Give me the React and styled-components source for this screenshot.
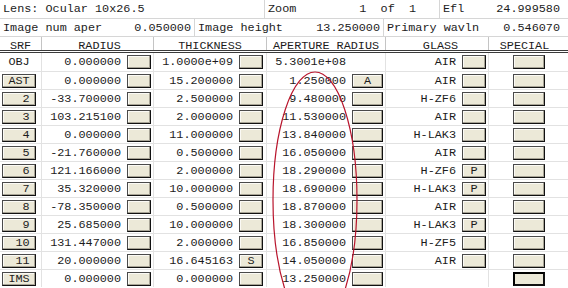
import React from 'react';
import styled, { createGlobalStyle } from 'styled-components';

const Global = createGlobalStyle`
  html, body { margin: 0; padding: 0; background: #ffffff; }
  body {
    font-family: "Liberation Mono", "DejaVu Sans Mono", monospace;
    font-size: 11.8px;
    color: #1c1c1c;
  }
`;

const Frame = styled.div`
  position: relative;
  width: 568px;
  height: 288px;
  overflow: hidden;
  background: #ffffff;
`;

const InfoRow = styled.div`
  display: grid;
  grid-template-columns: ${(p) => p.$cols};
  height: ${(p) => p.$h}px;
  box-sizing: border-box;
  border-bottom: 1px solid #d6d6d6;
`;

const InfoCell = styled.div`
  display: flex;
  align-items: center;
  justify-content: space-between;
  padding: 0 ${(p) => p.$pr ?? 3}px 0 3px;
  border-right: 1px solid #d6d6d6;
  white-space: pre;
  &:last-child { border-right: none; }
`;

const COLS = '42px 112px 113px 119px 103px 79px';

const HeaderRow = styled.div`
  display: grid;
  grid-template-columns: ${COLS};
  height: 16px;
  box-sizing: border-box;
  border-bottom: 3px double #3a3a3a;
`;

const HeaderCell = styled.div`
  box-sizing: border-box;
  height: 13px;
  padding: 3px ${(p) => p.$pr || 0}px 0 ${(p) => p.$pl || 0}px;
  line-height: 13px;
  text-align: center;
  border-right: 1px solid #c4c4c4;
  white-space: pre;
  &:last-child { border-right: none; }
`;

const Row = styled.div`
  display: grid;
  grid-template-columns: ${COLS};
  height: 18px;
  box-sizing: border-box;
  & + & { border-top: 1px solid #e2e2e2; }
`;

const Cell = styled.div`
  display: flex;
  align-items: center;
  justify-content: ${(p) => p.$justify || 'flex-end'};
  gap: 6px;
  padding: 0 ${(p) => p.$pr ?? 2}px 0 ${(p) => p.$pl ?? 0}px;
  border-right: 1px solid #e2e2e2;
  white-space: pre;
  &:last-child { border-right: none; }
`;

const Plain = styled.span`
  display: inline-block;
  width: ${(p) => p.$w || 'auto'};
  text-align: center;
`;

const Btn = styled.div`
  box-sizing: border-box;
  width: ${(p) => p.$w}px;
  height: 14px;
  flex: none;
  background: #ece9d8;
  border: ${(p) => (p.$focus ? '2px solid #000' : '1px solid #4a4a4a')};
  border-right-color: #111;
  border-bottom-color: #111;
  box-shadow: ${(p) => (p.$focus ? 'none' : 'inset -1px -1px 0 #a8a496, inset 1px 1px 0 #fbfaf5')};
  font-size: 11.8px;
  line-height: 12px;
  text-align: center;
  white-space: pre;
  color: #1c1c1c;
`;

const Overlay = styled.svg`
  position: absolute;
  left: 0;
  top: 0;
  pointer-events: none;
`;

const rows = [
  { srf: 'OBJ', plain: true, r: '0.000000', t: '1.0000e+09', a: '5.3001e+08', noA: true, g: 'AIR' },
  { srf: 'AST', r: '0.000000', t: '15.200000', a: '1.250000', aB: 'A', g: 'AIR' },
  { srf: '  2', r: '-33.700000', t: '2.500000', a: '9.480000', g: 'H-ZF6' },
  { srf: '  3', r: '103.215100', t: '2.000000', a: '11.530000', g: 'AIR' },
  { srf: '  4', r: '0.000000', t: '11.000000', a: '13.840000', g: 'H-LAK3' },
  { srf: '  5', r: '-21.760000', t: '0.500000', a: '16.050000', g: 'AIR' },
  { srf: '  6', r: '121.166000', t: '2.000000', a: '18.290000', g: 'H-ZF6', gB: 'P' },
  { srf: '  7', r: '35.320000', t: '10.000000', a: '18.690000', g: 'H-LAK3', gB: 'P' },
  { srf: '  8', r: '-78.350000', t: '0.500000', a: '18.870000', g: 'AIR' },
  { srf: '  9', r: '25.685000', t: '10.000000', a: '18.300000', g: 'H-LAK3', gB: 'P' },
  { srf: ' 10', r: '131.447000', t: '2.000000', a: '16.850000', g: 'H-ZF5' },
  { srf: ' 11', r: '20.000000', t: '16.645163', tB: 'S', a: '14.050000', g: 'AIR' },
  { srf: 'IMS', r: '0.000000', t: '0.000000', a: '13.250000', noG: true, focus: true },
];

export default function App() {
  return (
    <>
      <Global />
      <Frame>
        <InfoRow $h={19} $cols="265px 175px 128px">
          <InfoCell>Lens: Ocular 10x26.5</InfoCell>
          <InfoCell $pr={23}>
            <span>Zoom</span>
            <span>1  of  1</span>
          </InfoCell>
          <InfoCell $pr={8}>
            <span>Efl</span>
            <span>24.999580</span>
          </InfoCell>
        </InfoRow>
        <InfoRow $h={18} $cols="195px 189px 184px">
          <InfoCell>
            <span>Image num aper</span>
            <span>0.050000</span>
          </InfoCell>
          <InfoCell>
            <span>Image height</span>
            <span>13.250000</span>
          </InfoCell>
          <InfoCell $pr={8}>
            <span>Primary wavln</span>
            <span>0.546070</span>
          </InfoCell>
        </InfoRow>
        <HeaderRow>
          <HeaderCell>SRF</HeaderCell>
          <HeaderCell $pl={4}>RADIUS</HeaderCell>
          <HeaderCell>THICKNESS</HeaderCell>
          <HeaderCell>APERTURE RADIUS</HeaderCell>
          <HeaderCell $pl={7}>GLASS</HeaderCell>
          <HeaderCell $pr={8}>SPECIAL</HeaderCell>
        </HeaderRow>
        {rows.map((r, i) => (
          <Row key={i}>
            <Cell $justify="flex-start" $pl={2} $pr={0}>
              {r.plain ? <Plain $w="34px">{r.srf}</Plain> : <Btn $w={34}>{r.srf}</Btn>}
            </Cell>
            <Cell $pr={2}>
              <span>{r.r}</span>
              <Btn $w={24} />
            </Cell>
            <Cell $pr={3}>
              <span>{r.t}</span>
              <Btn $w={24}>{r.tB || ''}</Btn>
            </Cell>
            <Cell $pr={2}>
              <span>{r.a}</span>
              {r.noA ? <Plain $w="31px" /> : <Btn $w={31}>{r.aB || ''}</Btn>}
            </Cell>
            <Cell $pr={2}>
              {r.noG ? null : (
                <>
                  <span>{r.g}</span>
                  <Btn $w={24}>{r.gB || ''}</Btn>
                </>
              )}
            </Cell>
            <Cell $justify="center" $pr={0}>
              <Btn $w={32} $focus={r.focus} />
            </Cell>
          </Row>
        ))}
        <Overlay width="568" height="288" viewBox="0 0 568 288">
          <ellipse cx="315" cy="200" rx="42" ry="128" fill="none" stroke="#b8142c" strokeWidth="1.2" />
        </Overlay>
      </Frame>
    </>
  );
}
